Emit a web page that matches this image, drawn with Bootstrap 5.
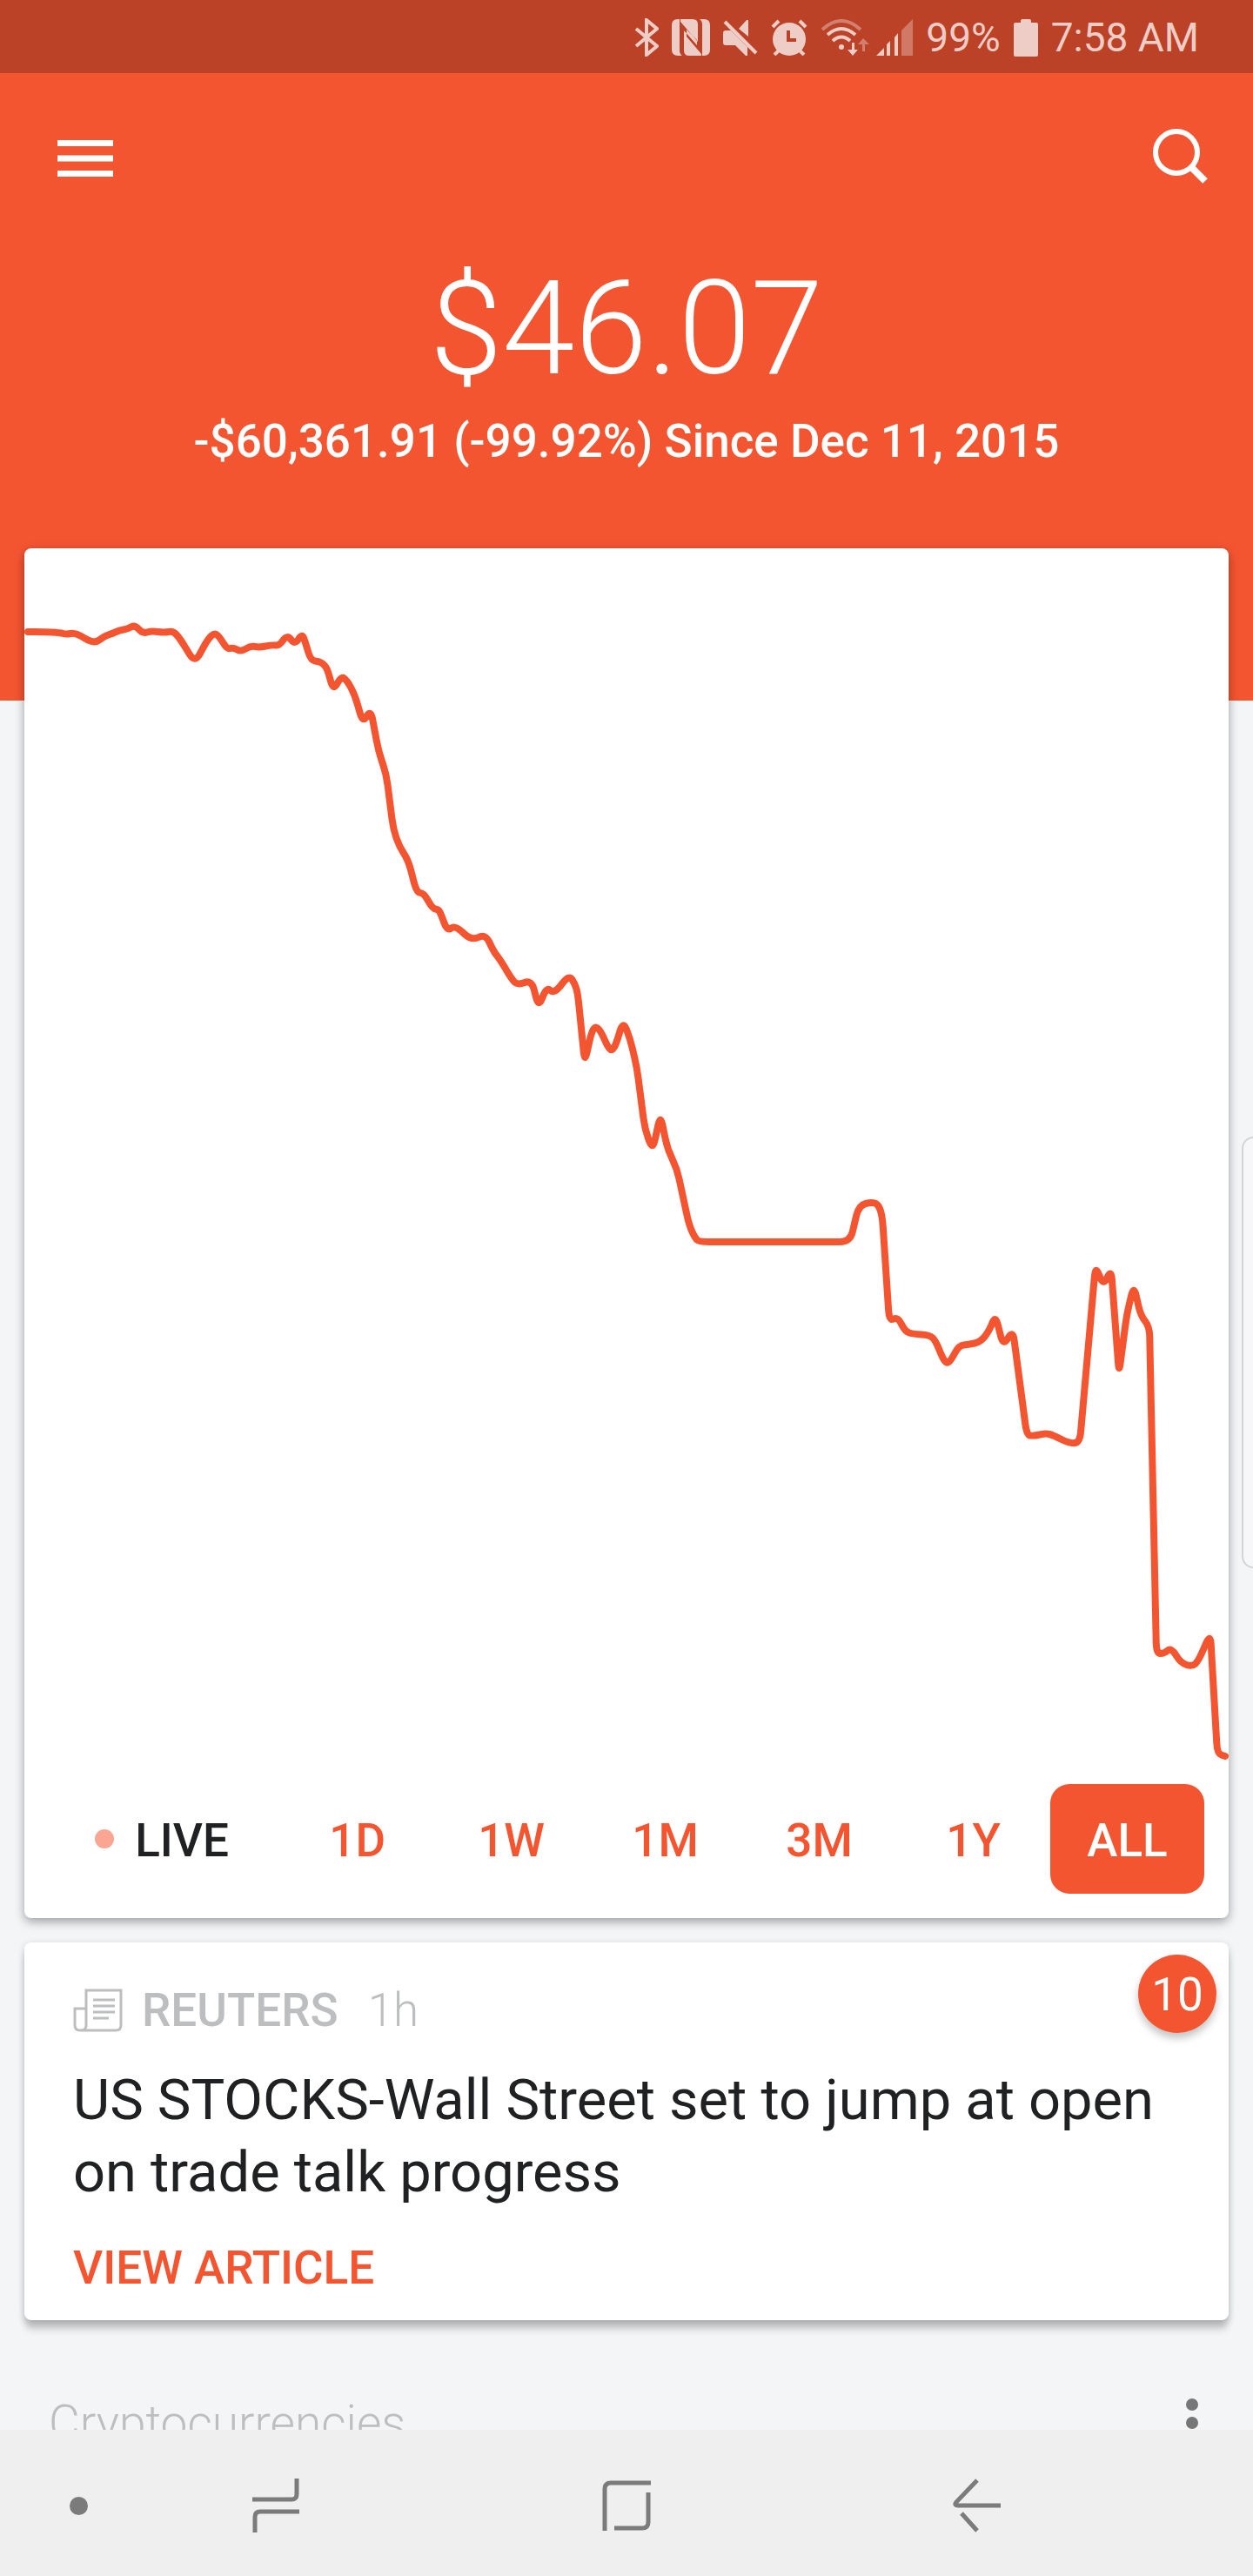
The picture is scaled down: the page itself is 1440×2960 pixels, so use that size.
<!DOCTYPE html>
<html lang="en">
<head>
<meta charset="utf-8">
<meta name="viewport" content="width=device-width, initial-scale=1">
<title>Portfolio</title>
<link href="https://cdn.jsdelivr.net/npm/bootstrap@5.3.0/dist/css/bootstrap.min.css" rel="stylesheet">
<style>
:root { --brand: #f45531; --ink: #202123; --soft: #bdbebf; --page: #f4f5f7; }
body { background: var(--page); color: var(--ink); font-family: Roboto, "Liberation Sans", sans-serif; font-size: 53px; line-height: 64px; min-height: 100vh; }
svg { display: block; }
.hero { background: var(--brand); color: #fff; padding-bottom: 267px; }
.status-strip { background: #bb4127; color: #eecdc6; height: 84px; padding: 2px 62px 0 0; gap: 15px; font-size: 46px; }
.status-strip svg { fill: currentColor; }
.wifi-signal { gap: 8px; }
.app-bar { height: 196px; padding: 0 52px 0 66px; }
.plain-btn { background: none; border: 0; padding: 0; color: inherit; }
.balance { font-size: 150px; line-height: 196px; font-weight: 300; }
.change { font-weight: 500; line-height: 62px; }
.feed { margin-top: -175px; padding: 0 28px; gap: 28px; }
.panel { border: 0; border-radius: 8px; box-shadow: 0 4px 12px rgba(0,0,0,.36); }
.panel-news { box-shadow: 0 11px 8px -1px rgba(0,0,0,.2), 0 2px 8px rgba(0,0,0,.16); }
.price-line { fill: none; stroke: var(--brand); stroke-width: 8; stroke-linecap: round; stroke-linejoin: round; }
.ranges { padding: 20px 28px 28px; }
.range-btn { flex: 1 1 0; height: 126px; border: 0; border-radius: 22px; background: none; color: var(--brand); font-weight: 500; padding: 4px 0 0; }
.range-btn.active { background: var(--brand); color: #fff; }
.range-live { flex-grow: 1.47; gap: 24px; color: var(--ink); padding-right: 6px; }
.live-dot { width: 22px; height: 22px; background: #faa693; margin-bottom: 4px; }
.news-body { padding: 46px 56px 28px; }
.news-meta { color: var(--soft); gap: 22px; }
.news-source { font-weight: 500; }
.news-age { font-weight: 300; margin-left: 12px; }
.headline { font-size: 65px; line-height: 83px; font-weight: 400; margin: 30px 0 36px; }
.news-link { color: var(--brand); font-weight: 500; text-decoration: none; }
.count-badge { top: 14px; right: 14px; width: 90px; height: 90px; padding-top: 2px; background: var(--brand); color: #fff; box-shadow: 0 6px 10px rgba(0,0,0,.24); }
.section-head { padding: 86px 56px 0; }
.section-title { font-size: 55px; line-height: 64px; font-weight: 300; color: var(--soft); margin: 0; }
.section-head svg { fill: #777; }
.nav-keys { background: #efefef; height: 168px; padding-top: 6px; color: #7b7b7b; }
.nav-keys svg { fill: none; stroke: currentColor; stroke-width: 5; }
.nav-side { width: 8%; }
.nav-dot { width: 21px; height: 21px; background: #7b7b7b; margin-right: 14px; }
.edge-handle { right: -14px; top: 1306px; width: 27px; height: 496px; border: 2px solid #d3d4d6; border-radius: 14px; background: #f7f7f9; }
</style>
</head>
<body class="overflow-hidden">
<header class="hero">
  <div class="status-strip d-flex align-items-center justify-content-end">
    <svg width="28" height="44" viewBox="0 0 28 44" aria-label="Bluetooth"><path d="M2 12 26 32 14 42V2L26 12 2 32" fill="none" stroke="currentColor" stroke-width="4"/></svg>
    <svg width="44" height="42" viewBox="0 0 44 42" aria-label="NFC"><path d="M7 0H9V36Q9 40 12 42H7Q0 42 0 35V7Q0 0 7 0ZM10 0H24Q30 0 30 6V26L10 3ZM37 42H35V6Q35 2 32 0H37Q44 0 44 7V35Q44 42 37 42ZM34 42H20Q14 42 14 36V13L29 30V24L17 12V20L34 40Z"/></svg>
    <svg width="40" height="42" viewBox="0 0 40 42" aria-label="Muted"><path d="M3 13H9L28 32V42H26L14 30H3Q0 30 0 27V16Q0 13 3 13ZM18 11 27 1H29V20Z"/><path d="M2 3 38 39" stroke="currentColor" stroke-width="4"/></svg>
    <svg width="42" height="42" viewBox="0 0 42 42" aria-label="Alarm"><circle cx="21" cy="23" r="19"/><path d="M2 9 9 2M40 9 33 2M9 36 4 41M33 36 38 41" stroke="currentColor" stroke-width="4"/><path d="M20 13V24H29" fill="none" stroke="#bb4127" stroke-width="4"/></svg>
    <div class="wifi-signal d-flex">
      <svg width="56" height="42" viewBox="0 0 56 42" aria-label="Wi-Fi"><g fill="none" stroke="currentColor" stroke-width="4"><path d="M2 12Q24-8 46 12" opacity=".45"/><path d="M8 18Q24 4 40 18M14 25Q24 16 34 25"/></g><circle cx="24" cy="32" r="3"/><path d="M36 27H39V35H43L37 42 31 35H36Z"/><path d="M48 37H51V29H56L49 22 43 29H48Z" opacity=".45"/></svg>
      <svg width="42" height="42" viewBox="0 0 42 42" aria-label="Signal"><path d="M0 42 9 33V42ZM12 29 16 25V42H12ZM21 21 25 16V42H21Z"/><path d="M29 13 42 0V42H29Z" opacity=".4"/></svg>
    </div>
    <span>99%</span>
    <svg width="28" height="43" viewBox="0 0 28 43" aria-label="Battery"><path d="M8 4V2Q8 0 10 0H18Q20 0 20 2V4H26Q28 4 28 6V41Q28 43 26 43H2Q0 43 0 41V6Q0 4 2 4Z"/></svg>
    <span>7:58 AM</span>
  </div>
  <div class="app-bar d-flex align-items-center justify-content-between">
    <button class="plain-btn" type="button" aria-label="Menu"><svg width="64" height="42" viewBox="0 0 64 42"><path d="M0 3.500H64M0 21H64M0 38.500H64" stroke="#fff" stroke-width="7"/></svg></button>
    <button class="plain-btn" type="button" aria-label="Search"><svg width="64" height="68" viewBox="0 0 64 68"><circle cx="28" cy="27" r="24" fill="none" stroke="#fff" stroke-width="6"/><path d="M45 44 61 60" stroke="#fff" stroke-width="8"/></svg></button>
  </div>
  <div class="balance text-center">$46.07</div>
  <div class="change text-center">-$60,361.91 (-99.92%) Since Dec 11, 2015</div>
</header>

<main class="feed d-flex flex-column">
  <section class="card panel" aria-label="Portfolio value">
    <svg class="w-100 h-auto" viewBox="28 630 1384 1400" role="img" aria-label="Value since Dec 11, 2015"><path id="priceLine" class="price-line"/></svg>
    <div class="ranges d-flex">
      <button class="range-btn range-live d-flex align-items-center justify-content-center" type="button"><span class="live-dot rounded-circle"></span>LIVE</button>
      <button class="range-btn" type="button">1D</button>
      <button class="range-btn" type="button">1W</button>
      <button class="range-btn" type="button">1M</button>
      <button class="range-btn" type="button">3M</button>
      <button class="range-btn" type="button">1Y</button>
      <button class="range-btn active" type="button">ALL</button>
    </div>
  </section>

  <article class="card panel panel-news">
    <div class="news-body">
      <div class="news-meta d-flex align-items-center">
        <svg width="57" height="50" viewBox="0 0 57 50" fill="none" stroke="currentColor" stroke-width="3"><path d="M15 44V2H55V42Q55 48 49 48H8Q2 48 2 42V23H15M15 42Q15 48 9 48"/><path d="M23 13H48M23 20H48M23 27H48M23 34H41"/></svg>
        <span class="news-source">REUTERS</span>
        <span class="news-age">1h</span>
      </div>
      <h2 class="headline">US STOCKS-Wall Street set to jump at open on trade talk progress</h2>
      <a class="news-link d-block" href="#">VIEW ARTICLE</a>
    </div>
    <span class="count-badge position-absolute rounded-circle d-flex align-items-center justify-content-center">10</span>
  </article>
</main>

<section class="section-head d-flex align-items-center justify-content-between">
  <h3 class="section-title">Cryptocurrencies</h3>
  <button class="plain-btn" type="button" aria-label="More"><svg width="28" height="56" viewBox="0 0 28 56"><circle cx="14" cy="7" r="7"/><circle cx="14" cy="28" r="7"/><circle cx="14" cy="49" r="7"/></svg></button>
</section>

<div class="edge-handle position-fixed"></div>

<nav class="nav-keys fixed-bottom d-flex align-items-center" aria-label="System">
  <div class="nav-side d-flex justify-content-end"><span class="nav-dot rounded-circle"></span></div>
  <button class="plain-btn flex-fill d-flex justify-content-center" type="button" aria-label="Recents"><svg width="56" height="62" viewBox="0 0 56 62"><path d="M1 24H46Q52 24 52 18V0M55 38H10Q4 38 4 44V62"/></svg></button>
  <button class="plain-btn flex-fill d-flex justify-content-center" type="button" aria-label="Home"><svg width="56" height="60" viewBox="0 0 56 60"><path d="M56 4H10Q3 4 3 11V59M53 15V49Q53 56 46 56H14"/></svg></button>
  <button class="plain-btn flex-fill d-flex justify-content-center" type="button" aria-label="Back"><svg width="56" height="62" viewBox="0 0 56 62"><path d="M28 2 4 27Q1 31 6 31H55M10 40 28 60"/></svg></button>
  <div class="nav-side"></div>
</nav>

<script src="https://cdn.jsdelivr.net/npm/bootstrap@5.3.0/dist/js/bootstrap.bundle.min.js"></script>
<script>
const prices = [
  [32,726],[50,726],[69,727],[76,729],[87,727],[108,740],[120,731],[129,728],[138,724],[146,723],[155,718],[164,728],[174,725],[189,727],[199,725],[207,734],
  [224,762],[239,734],[247,727],[253,733],[261,746],[268,744],[277,749],[288,742],[298,744],[313,741],[321,742],[330,729],[339,741],[347,728],[351,738],[357,759],
  [367,760],[373,764],[377,771],[383,794],[392,777],[399,782],[408,799],[417,831],[426,815],[435,863],[444,890],[452,953],[459,973],[469,988],[479,1026],[487,1026],
  [497,1044],[504,1045],[507,1051],[514,1070],[523,1063],[542,1081],[558,1073],[567,1093],[575,1103],[588,1125],[595,1132],[611,1126],[619,1158],[628,1134],[637,1142],[654,1120],[661,1131],[664,1142],
  [672,1221],[680,1185],[685,1179],[691,1186],[698,1202],[703,1208],[708,1200],[716,1173],[724,1193],[732,1227],[741,1297],[750,1322],[759,1281],[767,1320],[778,1343],[792,1408],[799,1423],[804,1427],
  [977,1427],[987,1385],[1003,1381],[1010,1385],[1014,1398],[1022,1518],[1032,1513],[1040,1530],[1050,1533],[1068,1534],[1075,1540],[1083,1560],[1088,1567],[1093,1563],[1102,1546],[1113,1545],[1127,1542],[1137,1529],
  [1144,1511],[1153,1547],[1164,1528],[1180,1649],[1188,1650],[1202,1647],[1210,1649],[1230,1659],[1241,1657],[1259,1454],[1268,1478],[1277,1458],[1286,1578],[1295,1510],[1303,1477],[1311,1512],[1321,1524],
  [1329,1900],[1338,1900],[1346,1893],[1357,1911],[1370,1915],[1377,1909],[1391,1877],[1399,2015],[1408,2018]
];

// Joins the points with straight runs and rounds each corner
function roundedPath(pts, radius) {
  const towards = (a, b) => {
    const len = Math.hypot(b[0] - a[0], b[1] - a[1]);
    const t = Math.min(radius, len / 2) / len;
    return [a[0] + (b[0] - a[0]) * t, a[1] + (b[1] - a[1]) * t];
  };
  let d = "M" + pts[0];
  for (let i = 1; i < pts.length - 1; i++) {
    d += "L" + towards(pts[i], pts[i - 1]) + "Q" + pts[i] + " " + towards(pts[i], pts[i + 1]);
  }
  return d + "L" + pts[pts.length - 1];
}
document.getElementById("priceLine").setAttribute("d", roundedPath(prices, 12));
</script>
</body>
</html>
